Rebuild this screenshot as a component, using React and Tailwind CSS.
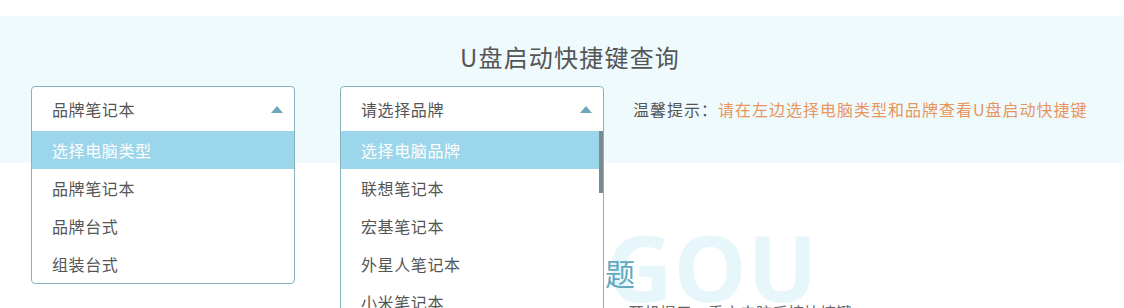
const TYPES = ['选择电脑类型', '品牌笔记本', '品牌台式', '组装台式']
const BRANDS = ['选择电脑品牌', '联想笔记本', '宏基笔记本', '外星人笔记本', '小米笔记本', '华硕笔记本', '戴尔笔记本']

const font = { fontFamily: '"Noto Sans CJK SC", "Noto Sans", sans-serif' }

function Caret() {
  return (
    <svg width="12" height="7" viewBox="0 0 12 7" className="shrink-0">
      <path d="M6 0 L12 7 L0 7 Z" fill="#6da8ba" />
    </svg>
  )
}

function OpenSelect({ value, options, scroll }) {
  return (
    <div className="relative w-[264px] h-[45px] shrink-0">
      {/* open menu */}
      <div className="absolute left-0 top-0 z-10 w-full border border-[#86b3c0] rounded-[4px] bg-white overflow-hidden">
        <div className="h-[44px] flex items-center justify-between pl-[20px] pr-[11px] text-[16px] tracking-[0.6px] text-[#555]">
          <span>{value}</span>
          <Caret />
        </div>
        <ul className={`relative ${scroll ? 'h-[190px]' : ''}`}>
          {options.map((o, i) => (
            <li
              key={o}
              className={`h-[38px] leading-[38px] pl-[20px] text-[16px] tracking-[0.6px] ${
                i === 0 ? 'bg-[#9cd6ea] text-white' : 'text-[#555]'
              }`}
            >
              {o}
            </li>
          ))}
          {scroll && <div className="absolute right-0 top-0 w-[4px] h-[62px] bg-[#7b8a90]" />}
        </ul>
      </div>
    </div>
  )
}

export default function App() {
  return (
    <div className="w-[1124px] h-[308px] overflow-hidden bg-white pt-[16px]" style={font}>
      {/* query band */}
      <section className="h-[147px] bg-[#effafd] pt-[25px]">
        <h1 className="text-center text-[24px] leading-[32px] tracking-[1.2px] text-[#555] pl-[16px]">
          U盘启动快捷键查询
        </h1>
        <div className="mt-[13px] flex items-start pl-[31px]">
          <OpenSelect value="品牌笔记本" options={TYPES} />
          <div className="ml-[45px]">
            <OpenSelect value="请选择品牌" options={BRANDS} scroll />
          </div>
          <p className="ml-[29px] h-[45px] flex items-center text-[16px] tracking-[1px] text-[#555]">
            温馨提示：<span className="text-[#e8955e]">请在左边选择电脑类型和品牌查看U盘启动快捷键</span>
          </p>
        </div>
      </section>

      {/* faq */}
      <section className="relative pt-[91px]">
        <div
          className="absolute left-[606px] top-[58px] text-[92px] leading-none font-bold tracking-[1px] text-[#e7f6fa] select-none"
          style={{ fontFamily: '"Open Sans", "Liberation Sans", sans-serif' }}
        >
          GOU
        </div>
        <h2 className="relative pl-[515px] text-[30px] leading-[36px] text-[#62a9bc]">常见问题</h2>
        <p className="relative mt-[12px] pl-[628px] text-[16px] leading-[20px] text-[#666]">
          开机提示：重启电脑后按快捷键
        </p>
      </section>
    </div>
  )
}
